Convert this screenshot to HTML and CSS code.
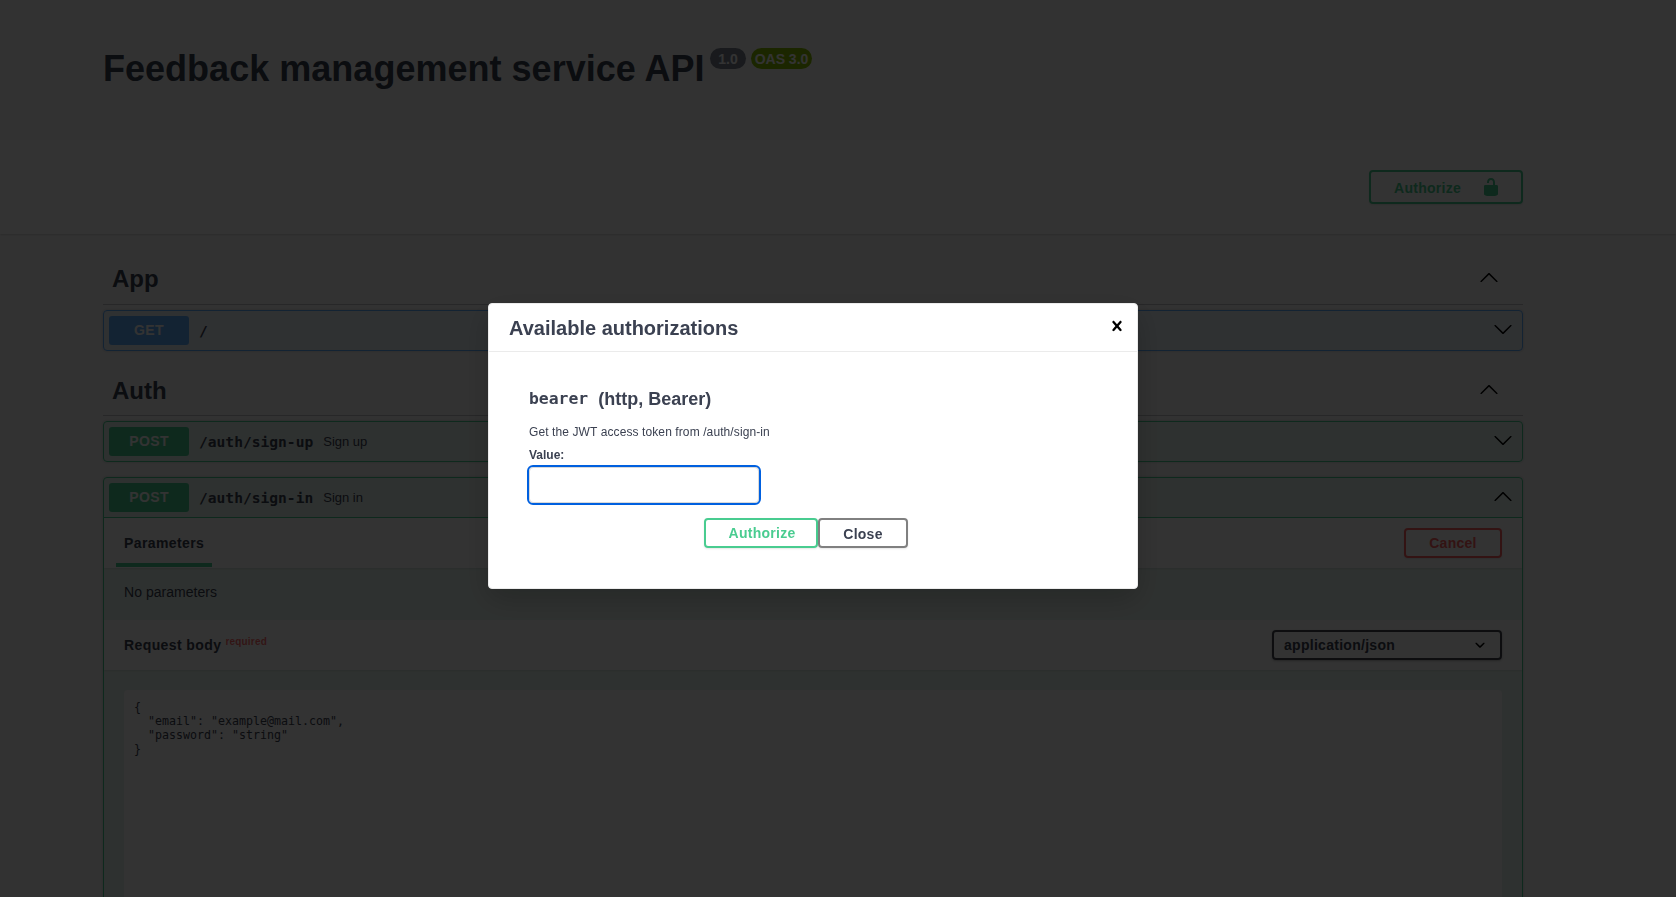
FILE: index.html
```html
<!DOCTYPE html>
<html lang="en">
<head>
<meta charset="utf-8">
<title>Swagger UI</title>
<link rel="stylesheet" href="styles.css">
</head>
<body>
<svg class="defs" width="0" height="0">
  <symbol id="arrow-down" viewBox="0 0 20 20"><path d="M17.418 6.109c.272-.268.709-.268.979 0s.271.701 0 .969l-7.908 7.83c-.27.268-.707.268-.979 0l-7.908-7.83c-.27-.268-.27-.701 0-.969.271-.268.709-.268.979 0L10 13.25l7.418-7.141z"/></symbol>
  <symbol id="arrow-up" viewBox="0 0 20 20"><path d="M17.418 14.908c.272.268.709.268.979 0s.271-.701 0-.969l-7.908-7.83c-.27-.268-.707-.268-.979 0l-7.908 7.83c-.27.268-.27.701 0 .969.271.268.709.268.979 0L10 7.767l7.418 7.141z"/></symbol>
  <symbol id="unlocked" viewBox="0 0 20 20"><path d="M15.8 8H14V5.6C14 2.703 12.665 1 10 1 7.334 1 6 2.703 6 5.6V6h2v-.801C8 3.754 8.797 3 10 3c1.203 0 2 .754 2 2.199V8H4c-.553 0-1 .646-1 1.199V17c0 .549.428 1.139.951 1.307l1.197.387C5.672 18.861 6.55 19 7.1 19h5.8c.549 0 1.428-.139 1.951-.307l1.196-.387c.524-.167.953-.757.953-1.306V9.199C17 8.646 16.352 8 15.8 8z"/></symbol>
  <symbol id="close" viewBox="0 0 20 20"><path d="M14.348 14.849c-.469.469-1.229.469-1.697 0L10 11.819l-2.651 3.029c-.469.469-1.229.469-1.697 0-.469-.469-.469-1.229 0-1.697l2.758-3.15-2.759-3.152c-.469-.469-.469-1.228 0-1.697.469-.469 1.228-.469 1.697 0L10 8.183l2.651-3.031c.469-.469 1.228-.469 1.697 0 .469.469.469 1.229 0 1.697l-2.758 3.152 2.758 3.15c.469.469.469 1.229 0 1.698z"/></symbol>
  <symbol id="chevron" viewBox="0 0 20 20"><path d="M13.418 7.859c.271-.268.709-.268.978 0 .27.268.272.701 0 .969l-3.908 3.83c-.27.268-.707.268-.979 0l-3.908-3.83c-.27-.267-.27-.701 0-.969.271-.268.709-.268.978 0L10 11l3.418-3.141z"/></symbol>
</svg>
<div class="page">
  <header class="info wrapper">
    <h1 class="title">Feedback management service API</h1>
    <span class="badge version">1.0</span>
    <span class="badge oas">OAS 3.0</span>
  </header>
  <div class="scheme">
    <div class="wrapper scheme-row">
      <button class="btn authorize top-authorize"><span>Authorize</span><svg class="icon"><use href="#unlocked"/></svg></button>
    </div>
  </div>
  <main class="wrapper">
    <section class="tag-section">
      <h3 class="tag"><span>App</span><svg class="icon"><use href="#arrow-up"/></svg></h3>
      <div class="op get">
        <div class="summary"><span class="method">GET</span><span class="path">/</span><svg class="icon"><use href="#arrow-down"/></svg></div>
      </div>
    </section>
    <section class="tag-section">
      <h3 class="tag"><span>Auth</span><svg class="icon"><use href="#arrow-up"/></svg></h3>
      <div class="op post">
        <div class="summary"><span class="method">POST</span><span class="path">/auth/sign-up</span><span class="desc">Sign up</span><svg class="icon"><use href="#arrow-down"/></svg></div>
      </div>
      <div class="op post open">
        <div class="summary"><span class="method">POST</span><span class="path">/auth/sign-in</span><span class="desc">Sign in</span><svg class="icon"><use href="#arrow-up"/></svg></div>
        <div class="section-head"><h4 class="tab">Parameters</h4><button class="btn cancel">Cancel</button></div>
        <p class="no-params">No parameters</p>
        <div class="section-head"><h4 class="body-title">Request body<span class="required">required</span></h4><div class="select"><span>application/json</span><svg class="icon"><use href="#chevron"/></svg></div></div>
        <div class="body-area"><pre class="editor">{
  "email": "example@mail.com",
  "password": "string"
}</pre></div>
      </div>
    </section>
  </main>
</div>
<div class="overlay">
  <div class="modal">
    <div class="modal-head"><h3>Available authorizations</h3><svg class="icon"><use href="#close"/></svg></div>
    <div class="modal-body">
      <h4 class="scheme-name"><code>bearer</code><span>(http, Bearer)</span></h4>
      <p class="hint">Get the JWT access token from /auth/sign-in</p>
      <label class="label" for="token">Value:</label>
      <input class="field" id="token" type="text">
      <div class="actions"><button class="btn authorize">Authorize</button><button class="btn done">Close</button></div>
    </div>
  </div>
</div>
</body>
</html>
```
FILE: styles.css
```css
*, *::before, *::after { box-sizing: border-box; }
body {
  margin: 0;
  height: 897px;
  overflow: hidden;
  background: #fafafa;
  color: #3b4151;
  font-family: "Liberation Sans", Arial, sans-serif;
}
h1, h3, h4, p, pre { margin: 0; }
.defs { display: none; }
.icon { width: 20px; height: 20px; flex: none; fill: #000; display: block; }
.page { height: 897px; overflow: hidden; }
.wrapper { width: 1420px; margin-left: 103px; }

.info { display: flex; height: 140px; padding-top: 48px; align-items: flex-start; }
.title { width: 607px; padding-top: 1px; font-size: 36px; line-height: 40px; letter-spacing: .02px; white-space: nowrap; }
.badge {
  height: 21px; border-radius: 11px; color: #fff;
  font-size: 14px; font-weight: 700; line-height: 22px; text-align: center; white-space: nowrap;
}
.version { width: 36px; margin-right: 5px; background: #7d8492; }
.oas { width: 61px; background: #89bf04; }

.scheme { height: 94px; padding-top: 30px; margin-bottom: 20px; background: #fff; box-shadow: 0 1px 2px rgba(0,0,0,.15); }
.scheme-row { display: flex; justify-content: flex-end; }

.btn {
  display: flex; align-items: center; justify-content: center;
  height: 30px; padding: 0; border: 2px solid gray; border-radius: 4px;
  background: transparent; box-shadow: 0 1px 2px rgba(0,0,0,.1);
  color: #3b4151; font: 700 14px "Liberation Sans", Arial, sans-serif; letter-spacing: .27px;
}
.authorize { border-color: #49cc90; color: #49cc90; }
.authorize .icon { fill: #49cc90; }
.top-authorize { width: 154px; height: 34px; padding: 0 20px 0 23px; justify-content: space-between; }
.top-authorize span { padding-top: 2px; }
.cancel { width: 98px; border-color: #ff6060; color: #ff6060; }

.tag {
  display: flex; align-items: center; justify-content: space-between;
  height: 51px; padding: 0 24px 0 9px; margin-bottom: 5px;
  border-bottom: 1px solid rgba(59,65,81,.3); font-size: 24px;
}
.tag-section + .tag-section .tag { height: 50px; }
.tag .icon { margin-bottom: 4px; }
.tag-section { padding-bottom: 15px; }
.op { border: 1px solid; border-radius: 4px; box-shadow: 0 0 3px rgba(0,0,0,.19); }
.op + .op { margin-top: 15px; }
.get { border-color: #61affe; background: rgba(97,175,254,.1); }
.post { border-color: #49cc90; background: rgba(73,204,144,.1); }
.get .method { background: #61affe; }
.post .method { background: #49cc90; }
.summary { display: flex; align-items: center; height: 39px; padding: 0 9px 0 5px; }
.summary .icon { margin: 0 0 4px auto; }
.method {
  width: 80px; height: 29px; margin-right: 10px; border-radius: 3px;
  color: #fff; font-size: 14px; font-weight: 700; line-height: 29px; text-align: center; letter-spacing: .4px;
}
.path { font: 700 14.6px/20px "DejaVu Sans Mono", monospace; margin-top: 1px; }
.desc { margin-left: 10px; font-size: 13px; }
.open { height: 600px; }
.open .summary { height: 40px; border-bottom: 1px solid #49cc90; }

.section-head {
  display: flex; align-items: center; justify-content: space-between;
  height: 50px; padding: 0 20px;
  background: #fdfdfd; box-shadow: 0 1px 2px rgba(0,0,0,.1); font-size: 14px;
}
.tab { width: 96px; height: 48px; margin-left: -8px; padding-left: 8px; border-bottom: 4px solid #49cc90; line-height: 48px; letter-spacing: .4px; }
.body-title { letter-spacing: .4px; }
.no-params { height: 52px; padding-left: 20px; font-size: 14px; line-height: 48px; letter-spacing: .04px; }
.required { margin-left: 4px; color: rgba(255,0,0,.6); font-size: 10px; font-weight: 700; letter-spacing: .2px; position: relative; top: -5px; }
.select {
  display: flex; align-items: center; justify-content: space-between;
  width: 230px; height: 30px; padding: 0 10px; border: 2px solid #41444e; border-radius: 4px;
  box-shadow: 0 1px 2px rgba(0,0,0,.25); font-weight: 700; letter-spacing: .28px;
}
.body-area { padding: 20px; }
.editor {
  height: 400px; padding: 10px; border-radius: 4px; background: #fdfdfd;
  font: 400 11.63px/14px "DejaVu Sans Mono", monospace;
}

.overlay { position: fixed; inset: 0; background: rgba(0,0,0,.8); }
.modal {
  position: absolute; left: 488px; top: 303px; width: 650px; height: 286px;
  border: 1px solid #ebebeb; border-radius: 4px; background: #fff;
  box-shadow: 0 10px 30px rgba(0,0,0,.2);
}
.modal-head {
  display: flex; align-items: center; justify-content: space-between;
  height: 48px; padding: 0 10px 0 20px; border-bottom: 1px solid #ebebeb;
}
.modal-head h3 { padding-top: 2px; font-size: 20px; }
.modal-head .icon { margin-bottom: 4px; }
.modal-body { padding: 36px 40px 0; }
.scheme-name { display: flex; gap: 10px; height: 22px; font-size: 18px; line-height: 22px; }
.scheme-name code { font: 700 16.4px/22px "DejaVu Sans Mono", monospace; }
.hint { margin-top: 15px; font-size: 12px; line-height: 14px; letter-spacing: .1px; }
.label { display: block; margin-top: 9px; font-size: 12px; font-weight: 700; line-height: 14px; }
.field {
  display: block; width: 230px; height: 36px; margin-top: 5px; padding: 8px 10px;
  border: 1px solid #d9d9d9; border-radius: 4px; outline: 2px solid #0060df; background: #fff;
}
.actions { display: flex; margin: 15px 0 0 175px; }
.actions .authorize { width: 114px; padding-left: 2px; }
.actions .done { width: 90px; padding-top: 1px; }
```
